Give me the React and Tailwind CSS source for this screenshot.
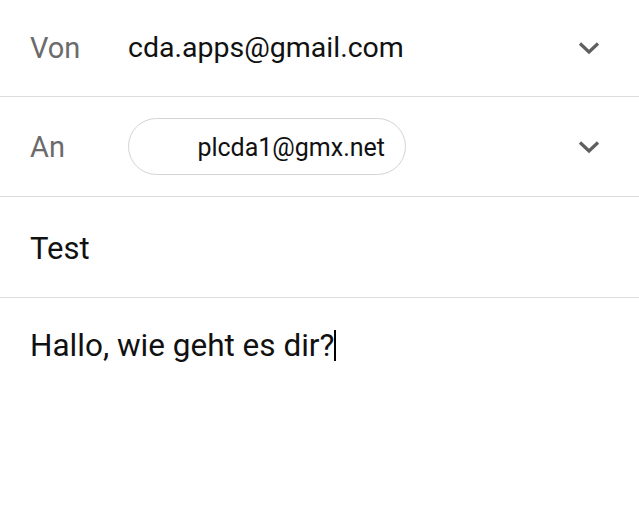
export default function App() {
  const Chevron = () => (
    <svg width="22" height="14" viewBox="0 0 22 14" className="shrink-0">
      <path d="M2 2.5 L11 11 L20 2.5" fill="none" stroke="#5f5f5f" strokeWidth="3.2" />
    </svg>
  );
  return (
    <div className="w-[639px] h-[522px] bg-white overflow-hidden text-[#111111]" style={{ fontFamily: "Roboto, 'Noto Sans', sans-serif" }}>
      <div className="h-[97px] flex items-center border-b border-[#dcdcdc] pl-[30px] pr-[39px]">
        <span className="w-[98px] text-[29px] text-[#6b6b6b] leading-none">Von</span>
        <span className="flex-1 text-[28.5px] leading-none">cda.apps@gmail.com</span>
        <Chevron />
      </div>
      <div className="h-[100px] flex items-center border-b border-[#dcdcdc] pl-[30px] pr-[39px]">
        <span className="w-[98px] text-[29px] text-[#6b6b6b] leading-none pt-[2px]">An</span>
        <div className="flex-1">
          <div className="w-[278px] h-[57px] rounded-full border border-[#d4d4d4] flex items-center justify-end pr-[20px]">
            <span className="text-[25px] leading-none pt-[2px]">plcda1@gmx.net</span>
          </div>
        </div>
        <Chevron />
      </div>
      <div className="h-[101px] flex items-center border-b border-[#dcdcdc] pl-[30px]">
        <span className="text-[31px] leading-none pt-[3px]">Test</span>
      </div>
      <div className="pl-[30px] pt-[32px] flex items-center">
        <span className="text-[31.5px] leading-none">Hallo, wie geht es dir?</span>
        <span className="w-[2px] h-[31px] bg-black" />
      </div>
    </div>
  );
}
